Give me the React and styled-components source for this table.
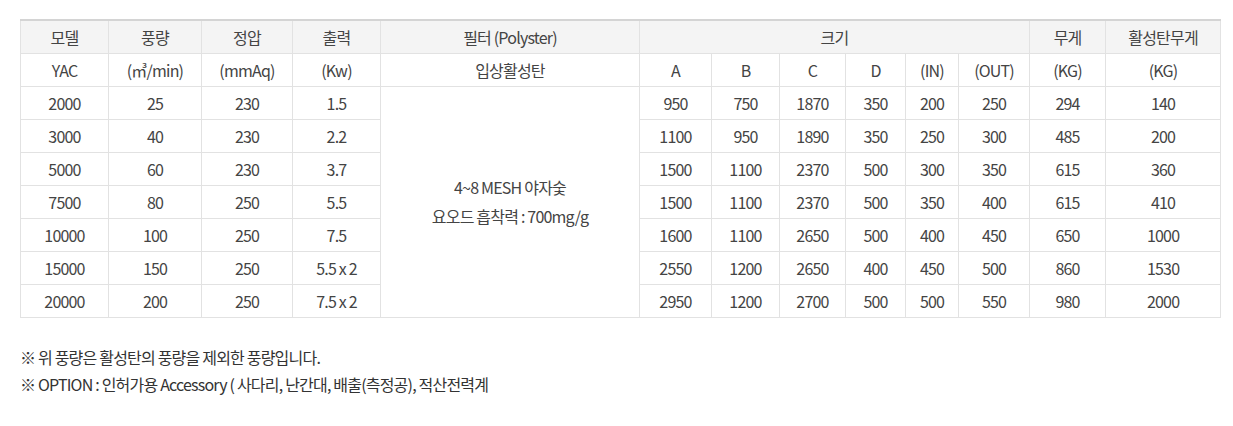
import React from "react";
import styled, { createGlobalStyle } from "styled-components";

const GlobalStyle = createGlobalStyle`
  body {
    margin: 0;
    background: #fff;
    font-family: "Noto Sans CJK KR", "Noto Sans", sans-serif;
    color: #444;
  }
`;

const Page = styled.div`
  padding: 19px 13px 0 20px;
`;

const Table = styled.table`
  width: 1200px;
  border-collapse: collapse;
  table-layout: fixed;
  border-top: 2px solid #d4d4d4;
  border-bottom: 1px solid #cfcfcf;
  font-size: 16px;
  letter-spacing: -0.8px;
`;

const Th = styled.th`
  height: 32px;
  padding: 0;
  font-weight: 400;
  color: #444;
  background: ${(p) => (p.$sub ? "#fff" : "#f4f4f4")};
  border: 1px solid #e2e2e2;
  text-align: center;
  vertical-align: middle;
  line-height: 20px;
`;

const Td = styled.td`
  height: 32px;
  padding: 0;
  border: 1px solid #e2e2e2;
  text-align: center;
  vertical-align: middle;
  color: #444;
  line-height: ${(p) => (p.$tall ? "29px" : "20px")};
`;

const Notes = styled.div`
  margin-top: 26px;
  font-size: 16px;
  letter-spacing: -0.8px;
  color: #333;
  line-height: 27px;
`;

const widths = [88, 93, 91, 88, 259, 72, 68, 66, 60, 53, 71, 76, 115];

const rows = [
  ["2000", "25", "230", "1.5", "950", "750", "1870", "350", "200", "250", "294", "140"],
  ["3000", "40", "230", "2.2", "1100", "950", "1890", "350", "250", "300", "485", "200"],
  ["5000", "60", "230", "3.7", "1500", "1100", "2370", "500", "300", "350", "615", "360"],
  ["7500", "80", "250", "5.5", "1500", "1100", "2370", "500", "350", "400", "615", "410"],
  ["10000", "100", "250", "7.5", "1600", "1100", "2650", "500", "400", "450", "650", "1000"],
  ["15000", "150", "250", "5.5 x 2", "2550", "1200", "2650", "400", "450", "500", "860", "1530"],
  ["20000", "200", "250", "7.5 x 2", "2950", "1200", "2700", "500", "500", "550", "980", "2000"],
];

export default function App() {
  return (
    <>
      <GlobalStyle />
      <Page>
        <Table>
          <colgroup>
            {widths.map((w, i) => (
              <col key={i} style={{ width: w }} />
            ))}
          </colgroup>
          <thead>
            <tr>
              <Th>모델</Th>
              <Th>풍량</Th>
              <Th>정압</Th>
              <Th>출력</Th>
              <Th>필터 (Polyster)</Th>
              <Th colSpan={6}>크기</Th>
              <Th>무게</Th>
              <Th>활성탄무게</Th>
            </tr>
            <tr>
              <Th $sub>YAC</Th>
              <Th $sub>(㎥/min)</Th>
              <Th $sub>(mmAq)</Th>
              <Th $sub>(Kw)</Th>
              <Th $sub>입상활성탄</Th>
              <Th $sub>A</Th>
              <Th $sub>B</Th>
              <Th $sub>C</Th>
              <Th $sub>D</Th>
              <Th $sub>(IN)</Th>
              <Th $sub>(OUT)</Th>
              <Th $sub>(KG)</Th>
              <Th $sub>(KG)</Th>
            </tr>
          </thead>
          <tbody>
            {rows.map((r, i) => (
              <tr key={i}>
                {r.slice(0, 4).map((v, j) => (
                  <Td key={j}>{v}</Td>
                ))}
                {i === 0 && (
                  <Td rowSpan={7} $tall>
                    4~8 MESH 야자숯
                    <br />
                    요오드 흡착력 : 700mg/g
                  </Td>
                )}
                {r.slice(4).map((v, j) => (
                  <Td key={j + 4}>{v}</Td>
                ))}
              </tr>
            ))}
          </tbody>
        </Table>
        <Notes>
          <div>※ 위 풍량은 활성탄의 풍량을 제외한 풍량입니다.</div>
          <div>※ OPTION : 인허가용 Accessory ( 사다리, 난간대, 배출(측정공), 적산전력계</div>
        </Notes>
      </Page>
    </>
  );
}
